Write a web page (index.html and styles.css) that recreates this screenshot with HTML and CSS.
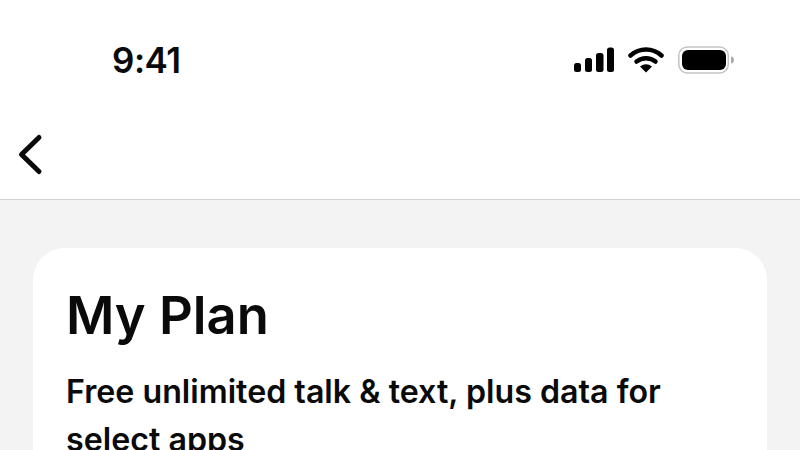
FILE: index.html
```html
<!DOCTYPE html>
<html lang="en">
<head>
    <meta charset="UTF-8">
    <title>My Plan</title>
    <link rel="stylesheet" href="styles.css">
</head>
<body>
    <div class="top">
        <div class="status">
            <div class="time">9:41</div>
            <div class="status_icons">
                <svg class="signal" width="40" height="26" viewBox="0 0 40 26">
                    <rect x="0" y="16" width="7" height="9" rx="2.500"/>
                    <rect x="11" y="11" width="7" height="14" rx="2.500"/>
                    <rect x="22" y="6" width="7.500" height="19" rx="2.500"/>
                    <rect x="33" y="0.500" width="7" height="24.500" rx="2.500"/>
                </svg>
                <svg class="wifi" width="36" height="26" viewBox="0 0 36 26">
                    <path d="M2.500 8.500C11.500 0.500 24.500 0.500 33.500 8.500" />
                    <path d="M8.500 14.500C14 10 22 10 27.500 14.500" />
                    <path class="wifi_dot" d="M12 19.500Q18 15 24 19.500L18 25.500Z" />
                </svg>
                <svg class="battery" width="58" height="28" viewBox="0 0 58 28">
                    <rect class="battery_line" x="0.800" y="1" width="49.500" height="26" rx="8.500"/>
                    <rect x="4" y="4" width="44" height="20" rx="6"/>
                    <path class="battery_cap" d="M53 10.500C55.500 11 56 12.500 56 14C56 15.500 55.500 17 53 17.500Z"/>
                </svg>
            </div>
        </div>
        <div class="nav">
            <svg class="back" width="28" height="44" viewBox="0 0 28 44">
                <path d="M23 4.500L5.500 21.500L23 38.500"/>
            </svg>
        </div>
    </div>
    <div class="content">
        <div class="card">
            <h1>My Plan</h1>
            <p>Free unlimited talk &amp; text, plus data for select apps</p>
        </div>
    </div>
</body>
</html>
```
FILE: styles.css
```css
*{
    margin:0;padding:0;
    box-sizing:border-box;
}
html,body{
    width:100%;
    height:100%;
    overflow:hidden;
}
body{
    display:flex;
    flex-direction:column;
    background-color:#f3f3f3;
    color:#0a0a0a;
    font-family:Inter,"Liberation Sans",sans-serif;
}
.top{
    flex:none;
    height:200px;
    background-color:#fff;
    border-bottom:1px solid #d2d2d2;
}
.status{
    display:flex;
    justify-content:space-between;
    align-items:center;
    height:120px;
    padding:0 64px 0 112px;
}
.time{
    font-size:35px;
    font-weight:600;
    line-height:40px;
    letter-spacing:-0.5px;
}
.status_icons{
    display:flex;
    align-items:center;
    gap:14px;
}
.signal{
    fill:#000;
}
.wifi{
    fill:none;
    stroke:#000;
    stroke-width:4.500;
    stroke-linecap:round;
}
.wifi_dot{
    fill:#000;
    stroke:none;
}
.battery{
    fill:#000;
}
.battery_line{
    fill:none;
    stroke:#c4c4c4;
    stroke-width:1.500;
}
.battery_cap{
    fill:#aaa;
}
.nav{
    display:flex;
    align-items:center;
    height:79px;
    margin-top:-5px;
    padding-left:16px;
}
.back{
    fill:none;
    stroke:#0a0a0a;
    stroke-width:5;
    stroke-linecap:round;
    stroke-linejoin:round;
}
.content{
    flex:1;
    min-height:0;
    padding:48px 33px 0;
}
.card{
    height:100%;
    padding:35px 90px 0 33px;
    background-color:#fff;
    border-radius:32px 32px 0 0;
}
h1{
    font-size:52.500px;
    font-weight:600;
    line-height:64px;
}
p{
    margin-top:21px;
    font-size:32.200px;
    font-weight:600;
    line-height:48px;
}
```
